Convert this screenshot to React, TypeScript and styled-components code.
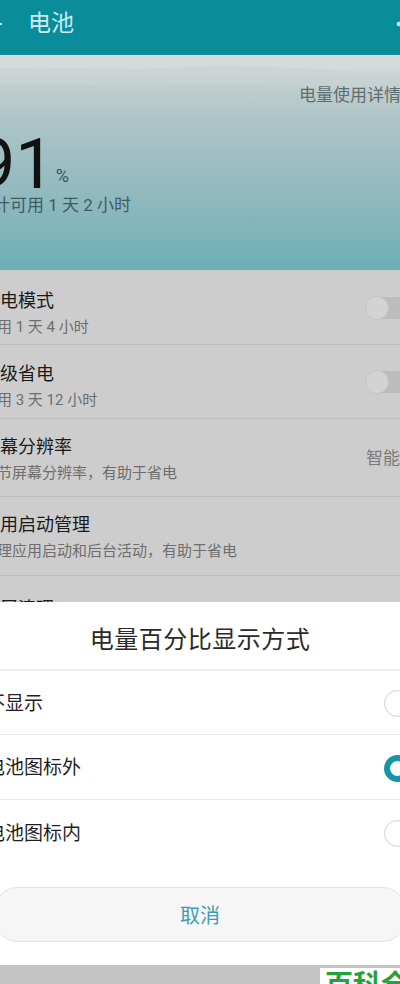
import React from 'react';
import styled, { createGlobalStyle } from 'styled-components';

// battery settings screen, dimmed behind the "percentage display" bottom sheet

const settings = [
  { title: '省电模式', sub: '可用 1 天 4 小时', kind: 'switch', h: 72, top: 16 },
  { title: '超级省电', sub: '可用 3 天 12 小时', kind: 'switch', h: 73, top: 16 },
  { title: '屏幕分辨率', sub: '调节屏幕分辨率，有助于省电', kind: 'value', value: '智能', h: 77, top: 15 },
  { title: '应用启动管理', sub: '管理应用启动和后台活动，有助于省电', kind: 'none', h: 78, top: 15 },
  { title: '锁屏清理', sub: '锁屏后自动关闭耗电应用', kind: 'none', h: 78, top: 20 }
];

const options = [
  { label: '不显示', checked: false },
  { label: '电池图标外', checked: true },
  { label: '电池图标内', checked: false }
];

const App = () => {
  return (
    <Frame>
      <GlobalStyle />
      <Screen>
        <Header>
          <BackIcon width="20" height="20" viewBox="0 0 20 20">
            <path d="M9 3 L2 10 L9 17 M2 10 H20" fill="none" stroke="#c8ecef" strokeWidth="2" />
          </BackIcon>
          <Title>电池</Title>
          <MoreIcon width="24" height="24" viewBox="0 0 24 24">
            <circle cx="4" cy="12" r="2.3" fill="#bfeaee" />
            <circle cx="12" cy="12" r="2.3" fill="#bfeaee" />
            <circle cx="20" cy="12" r="2.3" fill="#bfeaee" />
          </MoreIcon>
        </Header>

        <BatteryPanel>
          <Wave width="468" height="60" viewBox="0 0 468 60" preserveAspectRatio="none">
            <path d="M0 0 H468 V14 C380 22 300 6 220 12 C140 18 80 8 0 16 Z" fill="#ffffff" opacity="0.18" />
            <path d="M0 16 C80 8 140 18 220 12 C300 6 380 22 468 14 V34 C380 40 300 26 220 30 C140 34 70 26 0 32 Z" fill="#ffffff" opacity="0.08" />
          </Wave>
          <UsageLink>电量使用详情</UsageLink>
          <Level>
            <BigNumber>91</BigNumber>
            <Percent>%</Percent>
          </Level>
          <Estimate>预计可用 1 天 2 小时</Estimate>
        </BatteryPanel>

        <List>
          {settings.map((item, index) => (
            <Row key={index} $h={item.h} $top={item.top}>
              <RowText>
                <RowTitle>{item.title}</RowTitle>
                <RowSub>{item.sub}</RowSub>
              </RowText>
              {item.kind === 'switch' && (
                <Switch>
                  <Knob />
                </Switch>
              )}
              {item.kind === 'value' && (
                <ValueWrap>
                  <Value>{item.value}</Value>
                  <svg width="10" height="16" viewBox="0 0 10 16">
                    <path d="M2 2 L8 8 L2 14" fill="none" stroke="#9a9a9a" strokeWidth="1.6" />
                  </svg>
                </ValueWrap>
              )}
            </Row>
          ))}
        </List>

        <Sheet>
          <SheetTitle>电量百分比显示方式</SheetTitle>
          {options.map((opt, index) => (
            <Option key={index} $last={index === options.length - 1}>
              <OptionLabel>{opt.label}</OptionLabel>
              <Radio $checked={opt.checked} />
            </Option>
          ))}
          <CancelButton>取消</CancelButton>
        </Sheet>
      </Screen>
      <Watermark>百科全书</Watermark>
    </Frame>
  );
};

export default App;

const GlobalStyle = createGlobalStyle`
  html, body {
    margin: 0;
    padding: 0;
    background: #c4c4c4;
  }
  body {
    font-family: Roboto, "Noto Sans CJK SC", sans-serif;
  }
`;

const Frame = styled.div`
  position: relative;
  width: 400px;
  height: 984px;
  overflow: hidden;
  background: #c4c4c4;
`;

const Screen = styled.div`
  position: relative;
  width: 468px;
  height: 984px;
  margin-left: -34px;
  display: flex;
  flex-direction: column;
`;

const Header = styled.div`
  height: 55px;
  flex-shrink: 0;
  display: flex;
  align-items: center;
  padding: 0 15px 8px 16px;
  box-sizing: border-box;
  background: #0a8c9b;
`;

const BackIcon = styled.svg`
  display: block;
  flex-shrink: 0;
`;

const Title = styled.div`
  margin-left: 26px;
  font-size: 23px;
  line-height: 30px;
  color: #c8ecef;
`;

const MoreIcon = styled.svg`
  display: block;
  margin-left: auto;
`;

const BatteryPanel = styled.div`
  position: relative;
  height: 215px;
  flex-shrink: 0;
  padding: 0 33px 0 10px;
  display: flex;
  flex-direction: column;
  background: linear-gradient(
    180deg,
    #d1d5d4 0%,
    #c3cfcf 12%,
    #aec5c7 30%,
    #93babf 62%,
    #6eaeb6 100%
  );
  border-bottom: 2px solid #c6d0d1;
`;

const Wave = styled.svg`
  position: absolute;
  top: 0;
  left: 0;
`;

const UsageLink = styled.div`
  position: relative;
  align-self: flex-end;
  margin-top: 28px;
  font-size: 17px;
  line-height: 24px;
  color: #5f6e70;
`;

const Level = styled.div`
  position: relative;
  margin-top: 27px;
  height: 60px;
  white-space: nowrap;
`;

const BigNumber = styled.span`
  font-family: Roboto, sans-serif;
  font-weight: 400;
  font-size: 70px;
  line-height: 60px;
  color: #111;
`;

const Percent = styled.span`
  font-family: Roboto, sans-serif;
  font-size: 18px;
  line-height: 20px;
  color: #3d5257;
  vertical-align: 6px;
  margin-left: 1px;
`;

const Estimate = styled.div`
  position: relative;
  font-size: 17px;
  line-height: 22px;
  color: #3e5c62;
`;

const List = styled.div`
  display: flex;
  flex-direction: column;
  background: #cdcdcd;
`;

const Row = styled.div<{ $h: number; $top: number }>`
  height: ${(p) => p.$h - p.$top}px;
  padding: ${(p) => p.$top}px 18px 0 16px;
  display: flex;
  justify-content: space-between;
  align-items: flex-start;
  border-bottom: 1px solid #bebebe;
`;

const RowText = styled.div`
  display: flex;
  flex-direction: column;
  gap: 2px;
`;

const RowTitle = styled.div`
  font-size: 18px;
  line-height: 26px;
  color: #1a1a1a;
`;

const RowSub = styled.div`
  font-size: 15px;
  line-height: 22px;
  color: #6e6e6e;
`;

const Switch = styled.div`
  align-self: center;
  margin-top: -16px;
  width: 50px;
  height: 22px;
  border-radius: 11px;
  background: #bcbcbc;
  display: flex;
  align-items: center;
`;

const Knob = styled.div`
  width: 22px;
  height: 22px;
  margin-left: -1px;
  border-radius: 50%;
  background: #d3d3d3;
  border: 1px solid #c3c3c3;
`;

const ValueWrap = styled.div`
  align-self: center;
  margin-top: -15px;
  display: flex;
  align-items: center;
  gap: 6px;
`;

const Value = styled.div`
  font-size: 17px;
  line-height: 24px;
  color: #7b7b7b;
`;

const Sheet = styled.div`
  position: absolute;
  left: 0;
  right: 0;
  bottom: 19px;
  height: 363px;
  box-sizing: border-box;
  background: #ffffff;
  display: flex;
  flex-direction: column;
  padding: 0 0 23px;
`;

const SheetTitle = styled.div`
  height: 69px;
  flex-shrink: 0;
  padding-top: 3px;
  box-sizing: border-box;
  display: flex;
  align-items: center;
  justify-content: center;
  font-size: 24px;
  letter-spacing: 0.5px;
  color: #2a2a2a;
  border-bottom: 2px solid #ececec;
`;

const Option = styled.div<{ $last: boolean }>`
  height: 64px;
  flex-shrink: 0;
  display: flex;
  align-items: center;
  justify-content: space-between;
  padding: 2px 23px 0 20px;
  box-sizing: border-box;
  border-bottom: ${(p) => (p.$last ? 'none' : '1px solid #e8e8e8')};
  & + & {
    height: 65px;
  }
`;

const OptionLabel = styled.div`
  font-size: 19px;
  line-height: 26px;
  color: #1f1f1f;
`;

const Radio = styled.div<{ $checked: boolean }>`
  width: 27px;
  height: 27px;
  box-sizing: border-box;
  border-radius: 50%;
  border: ${(p) => (p.$checked ? '6px solid #1595a7' : '1.5px solid #d2d2d2')};
  background: #fff;
`;

const CancelButton = styled.div`
  margin: 22px 29px 0;
  height: 55px;
  flex-shrink: 0;
  box-sizing: border-box;
  border-radius: 22px;
  border: 1px solid #e3e3e3;
  background: #f6f6f6;
  display: flex;
  align-items: center;
  justify-content: center;
  font-size: 20px;
  color: #3a9fb0;
`;

const Watermark = styled.div`
  position: absolute;
  right: 0;
  bottom: 0;
  width: 80px;
  height: 16px;
  padding-left: 5px;
  box-sizing: border-box;
  background: #ffffff;
  overflow: hidden;
  font-size: 28px;
  font-weight: 700;
  line-height: 36px;
  color: #22a33a;
  white-space: nowrap;
`;
